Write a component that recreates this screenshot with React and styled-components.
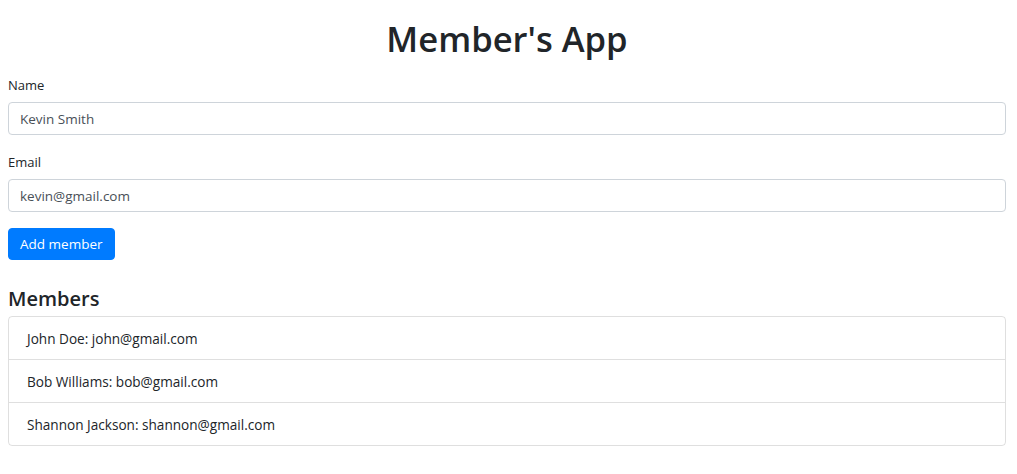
import React from "react";
import styled, { createGlobalStyle } from "styled-components";

const Global = createGlobalStyle`
  html, body { margin: 0; padding: 0; background: #fff; }
  body {
    font-family: "Open Sans", "Noto Sans", Arial, sans-serif;
    font-size: 13px;
    color: #212529;
  }
  * { box-sizing: border-box; }
`;

const Page = styled.div`
  padding: 0 11px 0 8px;
`;

const Title = styled.h1`
  margin: 0;
  padding-top: 18px;
  height: 74px;
  font-size: 34.6px;
  font-weight: 600;
  line-height: 42px;
  text-align: center;
  color: #212529;
`;

const Field = styled.div`
  display: flex;
  flex-direction: column;
  margin-bottom: 16px;
`;

const Label = styled.label`
  display: block;
  font-size: 13px;
  line-height: 20px;
  margin-bottom: 8px;
  margin-top: 1px;
`;

const Input = styled.input`
  display: block;
  width: 100%;
  height: 33px;
  margin-top: -1px;
  padding: 0 11px;
  font-family: inherit;
  font-size: 13.5px;
  color: #495057;
  border: 1px solid #ced4da;
  border-radius: 4px;
  outline: none;
  background: #fff;
`;

const Button = styled.button`
  display: inline-block;
  height: 32px;
  padding: 0 11px;
  font-family: inherit;
  font-size: 13.5px;
  color: #fff;
  background: #007bff;
  border: 1px solid #007bff;
  border-radius: 4px;
  cursor: pointer;
`;

const SubTitle = styled.h2`
  margin: 24px 0 0;
  font-size: 20px;
  font-weight: 600;
  line-height: 30px;
  color: #212529;
`;

const List = styled.ul`
  list-style: none;
  margin: 2px 0 0;
  padding: 0;
  border: 1px solid rgba(0, 0, 0, 0.125);
  border-radius: 4px;
`;

const Item = styled.li`
  height: ${(p) => (p.$last ? "42px" : "43px")};
  display: flex;
  align-items: center;
  padding: 0 18px;
  font-size: 13.6px;
  color: #212529;
  border-bottom: ${(p) => (p.$last ? "none" : "1px solid rgba(0,0,0,0.125)")};
`;

const members = [
  { name: "John Doe", email: "john@gmail.com" },
  { name: "Bob Williams", email: "bob@gmail.com" },
  { name: "Shannon Jackson", email: "shannon@gmail.com" },
];

export default function App() {
  return (
    <Page>
      <Global />
      <Title>Member's App</Title>
      <Field>
        <Label>Name</Label>
        <Input defaultValue="Kevin Smith" />
      </Field>
      <Field>
        <Label>Email</Label>
        <Input defaultValue="kevin@gmail.com" />
      </Field>
      <Button>Add member</Button>
      <SubTitle>Members</SubTitle>
      <List>
        {members.map((m, i) => (
          <Item key={m.name} $last={i === members.length - 1}>
            {m.name}: {m.email}
          </Item>
        ))}
      </List>
    </Page>
  );
}
